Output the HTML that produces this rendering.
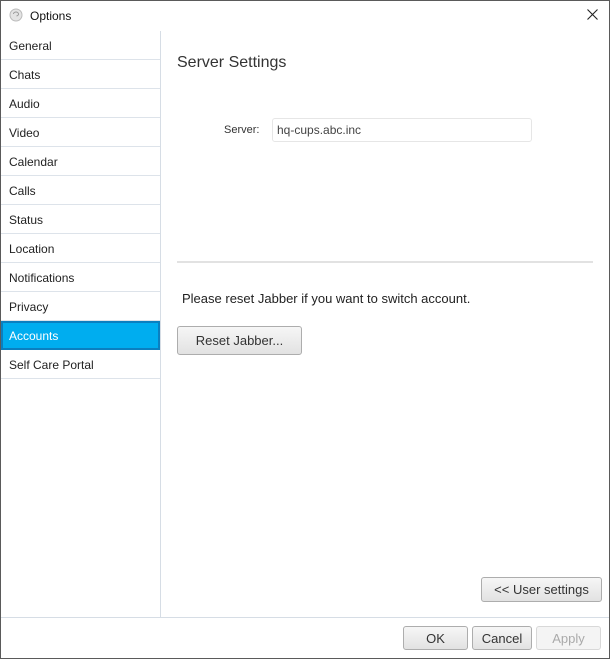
<!DOCTYPE html>
<html><head><style>
*{margin:0;padding:0;box-sizing:border-box}
body{width:610px;height:659px;background:#fff;font-family:"Liberation Sans",sans-serif;font-size:12px;color:#222;position:relative;overflow:hidden}
.win{position:absolute;left:0;top:0;width:610px;height:659px;border:1px solid #5a5a5a}
.abs{position:absolute}
.item{position:absolute;left:1px;width:159px;height:29px;border-bottom:1px solid #dde3ea;padding-left:8px;line-height:30px;font-size:12px;color:#222}
.sel{background:#00adef;border:2px solid #0a7fc0;color:#fff;padding-left:6px;line-height:27px}
.btn{position:absolute;border:1px solid #adadad;border-radius:3px;background:linear-gradient(#f6f6f6,#e2e2e2);text-align:center;color:#333;font-size:13px}
</style></head><body>
<div class="win"></div>
<svg class="abs" style="left:9px;top:8px" width="14" height="14" viewBox="0 0 14 14"><circle cx="7" cy="7" r="6" fill="#e4e4e4" stroke="#bbb"/><path d="M4.5 6a2.5 2 0 1 1 3 2" stroke="#999" fill="none"/></svg>
<div class="abs" style="left:30px;top:9px;font-size:12px;color:#111">Options</div>
<svg class="abs" style="left:587px;top:9px" width="11" height="11" viewBox="0 0 11 11"><path d="M0.5 0.5L10.5 10.5M10.5 0.5L0.5 10.5" stroke="#222" stroke-width="1.1"/></svg>
<div class="abs" style="left:160px;top:31px;width:1px;height:586px;background:#d6dde5"></div>
<div class="item" style="top:31px">General</div>
<div class="item" style="top:60px">Chats</div>
<div class="item" style="top:89px">Audio</div>
<div class="item" style="top:118px">Video</div>
<div class="item" style="top:147px">Calendar</div>
<div class="item" style="top:176px">Calls</div>
<div class="item" style="top:205px">Status</div>
<div class="item" style="top:234px">Location</div>
<div class="item" style="top:263px">Notifications</div>
<div class="item" style="top:292px">Privacy</div>
<div class="item sel" style="top:321px;height:29px">Accounts</div>
<div class="item" style="top:350px">Self Care Portal</div>
<div class="abs" style="left:177px;top:54px;font-size:16px;color:#333">Server Settings</div>
<div class="abs" style="left:224px;top:124px;font-size:11px;color:#333">Server:</div>
<div class="abs" style="left:272px;top:118px;width:260px;height:24px;border:1px solid #e6e6e6;border-radius:3px;padding-left:4px;line-height:23px;font-size:12px;color:#444">hq-cups.abc.inc</div>
<div class="abs" style="left:177px;top:261px;width:416px;height:2px;background:#e2e2e2"></div>
<div class="abs" style="left:182px;top:291px;font-size:13px;color:#222">Please reset Jabber if you want to switch account.</div>
<div class="btn" style="left:177px;top:326px;width:125px;height:29px;line-height:28px">Reset Jabber...</div>
<div class="btn" style="left:481px;top:577px;width:121px;height:25px;line-height:24px">&lt;&lt; User settings</div>
<div class="abs" style="left:1px;top:617px;width:608px;height:1px;background:#d6dde5"></div>
<div class="btn" style="left:403px;top:626px;width:65px;height:24px;line-height:23px">OK</div>
<div class="btn" style="left:472px;top:626px;width:60px;height:24px;line-height:23px">Cancel</div>
<div class="btn" style="left:536px;top:626px;width:65px;height:24px;line-height:23px;color:#aaa;border-color:#d8d8d8;background:#f4f4f4">Apply</div>
</body></html>
